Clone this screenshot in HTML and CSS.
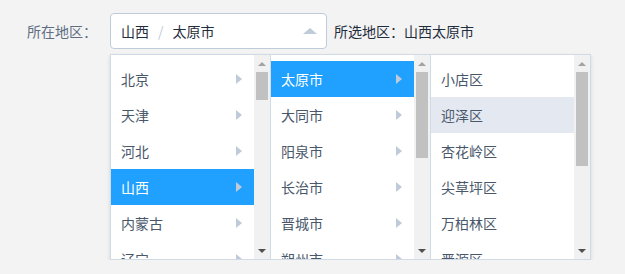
FILE: index.html
```html
<!DOCTYPE html>
<html lang="zh-CN">
<head>
    <meta charset="UTF-8">
    <title>级联选择</title>
    <link rel="stylesheet" href="styles.css">
</head>
<body>
    <div class="form-row">
        <label class="form-label">所在地区：</label>
        <div class="cascader">
            <div class="cascader-input">
                <span class="cascader-value">山西<span class="sep">/</span>太原市</span>
                <span class="caret"></span>
            </div>

            <div class="cascader-menus">
                <div class="menu">
                    <ul class="menu-list">
                        <li class="menu-item">北京<span class="arrow"></span></li>
                        <li class="menu-item">天津<span class="arrow"></span></li>
                        <li class="menu-item">河北<span class="arrow"></span></li>
                        <li class="menu-item active">山西<span class="arrow"></span></li>
                        <li class="menu-item">内蒙古<span class="arrow"></span></li>
                        <li class="menu-item">辽宁<span class="arrow"></span></li>
                    </ul>
                    <div class="scrollbar">
                        <span class="scroll-btn up"></span>
                        <div class="scroll-track"><div class="scroll-thumb thumb-short"></div></div>
                        <span class="scroll-btn down"></span>
                    </div>
                </div>
                <div class="menu">
                    <ul class="menu-list">
                        <li class="menu-item active">太原市<span class="arrow"></span></li>
                        <li class="menu-item">大同市<span class="arrow"></span></li>
                        <li class="menu-item">阳泉市<span class="arrow"></span></li>
                        <li class="menu-item">长治市<span class="arrow"></span></li>
                        <li class="menu-item">晋城市<span class="arrow"></span></li>
                        <li class="menu-item">朔州市<span class="arrow"></span></li>
                    </ul>
                    <div class="scrollbar">
                        <span class="scroll-btn up"></span>
                        <div class="scroll-track"><div class="scroll-thumb thumb-mid"></div></div>
                        <span class="scroll-btn down"></span>
                    </div>
                </div>
                <div class="menu">
                    <ul class="menu-list">
                        <li class="menu-item">小店区</li>
                        <li class="menu-item hover">迎泽区</li>
                        <li class="menu-item">杏花岭区</li>
                        <li class="menu-item">尖草坪区</li>
                        <li class="menu-item">万柏林区</li>
                        <li class="menu-item">晋源区</li>
                    </ul>
                    <div class="scrollbar">
                        <span class="scroll-btn up"></span>
                        <div class="scroll-track"><div class="scroll-thumb thumb-long"></div></div>
                        <span class="scroll-btn down"></span>
                    </div>
                </div>
            </div>
        </div>
        <div class="selected-text">所选地区：山西太原市</div>
    </div>
</body>
</html>
```

FILE: styles.css
```css
body {
    margin: 0;
    background-color: #f3f3f3;
    font-family: "Noto Sans CJK SC", "Liberation Sans", sans-serif;
    font-size: 14px;
    color: #48576a;
}
.form-row {
    display: flex;
    align-items: flex-start;
    padding: 13px 0 0 27px;
}
.form-label {
    width: 83px;
    line-height: 36px;
    color: #5e6d82;
}
.cascader {
    display: flex;
    flex-direction: column;
    align-items: flex-start;
    width: 217px;
}
.cascader-input {
    box-sizing: border-box;
    width: 217px;
    height: 36px;
    display: flex;
    align-items: center;
    justify-content: space-between;
    padding: 0 9px 0 10px;
    background-color: white;
    border: 1px solid #bfcbd9;
    border-radius: 4px;
}
.cascader-value {
    color: #1f2d3d;
}
.sep {
    color: #bfcbd9;
    margin: 0 9px;
}
.caret {
    width: 0;
    height: 0;
    border-left: 7px solid transparent;
    border-right: 7px solid transparent;
    border-bottom: 6px solid #bfcbd9;
}
.selected-text {
    margin-left: 7px;
    line-height: 36px;
    color: #1f2d3d;
}
.cascader-menus {
    display: flex;
    flex-shrink: 0;
    margin-top: 5px;
    height: 204px;
    background-color: white;
    border: 1px solid #d1dbe5;
    box-shadow: 0 2px 4px rgba(0,0,0,0.12);
}
.menu {
    display: flex;
    flex-shrink: 0;
    width: 159px;
    border-right: 1px solid #d1dbe5;
}
.menu:last-child {
    border-right: none;
}
.menu-list {
    list-style-type: none;
    margin: 0;
    padding: 6px 0 0;
    width: 143px;
    overflow: hidden;
}
.menu-item {
    position: relative;
    height: 36px;
    line-height: 36px;
    padding-left: 10px;
    white-space: nowrap;
}
.menu-item.active {
    background-color: #20a0ff;
    color: white;
}
.menu-item.hover {
    background-color: #e4e8f1;
}
.arrow {
    position: absolute;
    right: 12px;
    top: 13px;
    width: 0;
    height: 0;
    border-top: 5px solid transparent;
    border-bottom: 5px solid transparent;
    border-left: 6px solid #bfcbd9;
}
.scrollbar {
    width: 16px;
    flex-shrink: 0;
    display: flex;
    flex-direction: column;
    background-color: #f1f1f1;
}
.scroll-btn {
    height: 17px;
    display: flex;
    align-items: center;
    justify-content: center;
}
.scroll-btn::after {
    content: "";
    width: 0;
    height: 0;
    border-left: 4px solid transparent;
    border-right: 4px solid transparent;
}
.scroll-btn.up::after {
    border-bottom: 4px solid #a3a3a3;
}
.scroll-btn.down::after {
    border-top: 4px solid #505050;
}
.scroll-track {
    flex: 1;
}
.scroll-thumb {
    margin: 0 2px;
    background-color: #c1c1c1;
}
.thumb-short {
    height: 28px;
}
.thumb-mid {
    height: 86px;
}
.thumb-long {
    height: 94px;
}
```
